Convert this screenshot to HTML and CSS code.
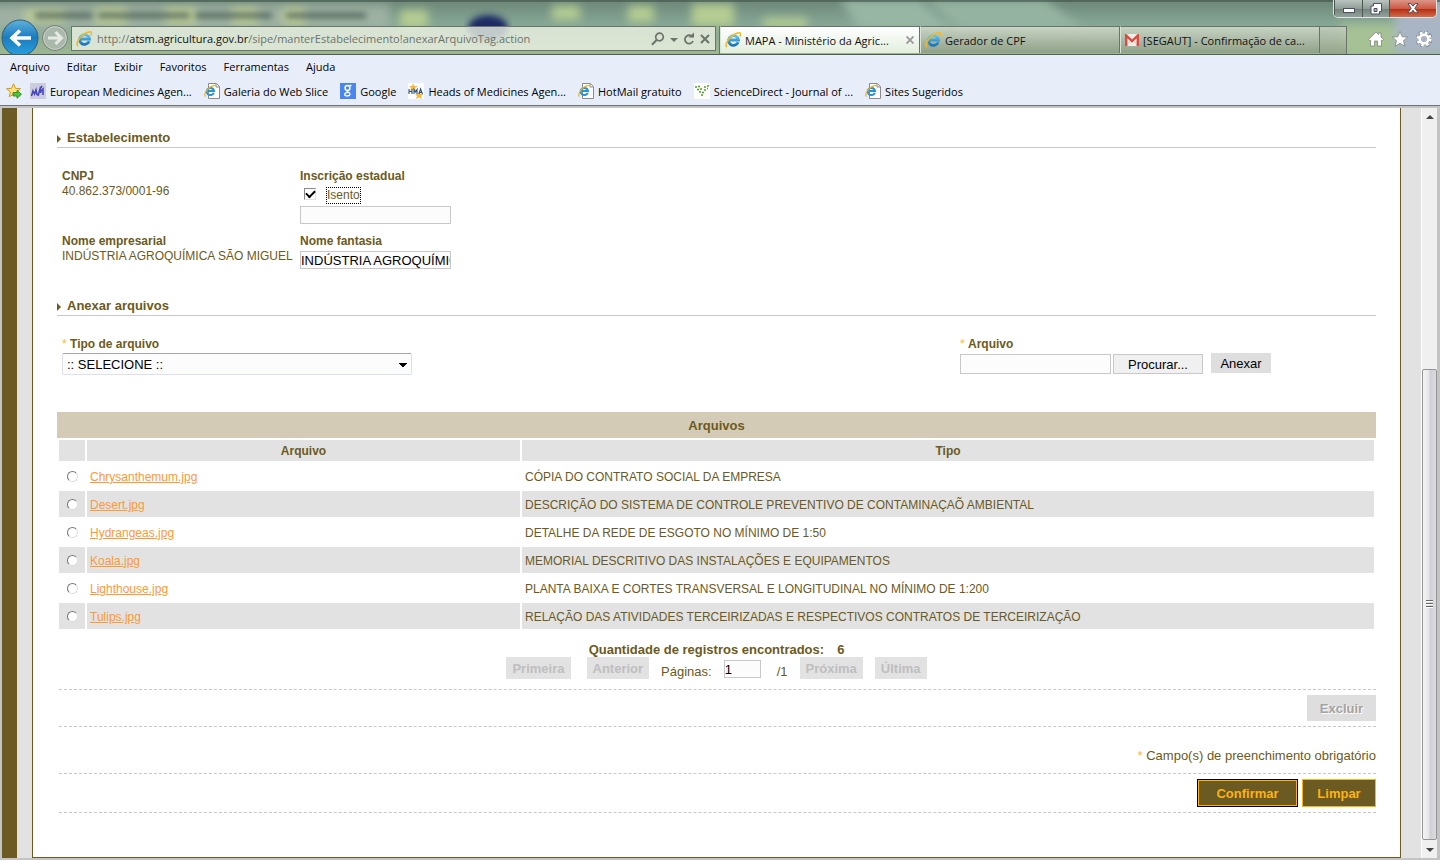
FILE: index.html
```html
<!DOCTYPE html>
<html lang="pt-BR">
<head>
<meta charset="utf-8">
<title>MAPA - Ministério da Agricultura</title>
<link rel="stylesheet" href="styles.css">
</head>
<body>
<svg class="defs" width="0" height="0" aria-hidden="true">
  <defs>
    <linearGradient id="blue" x1="0" y1="0" x2="0" y2="1"><stop offset="0" stop-color="#5fc3f0"/><stop offset="1" stop-color="#1b76bd"/></linearGradient>
    <symbol id="ie" viewBox="0 0 16 16">
      <path d="M13.2 10.2a5 4.8 0 1 1 .3-2.2H5" fill="none" stroke="url(#blue)" stroke-width="2.8"/>
      <path d="M2.2 15C-.4 14 1.800 8.200 6.200 4.600 10 1.400 14.600 0 15.400 1.500c.4.800 0 2-.6 3" fill="none" stroke="#f4b81c" stroke-width="1.500"/>
    </symbol>
    <symbol id="iepage" viewBox="0 0 16 16">
      <path d="M4.500.500h8l3 3v12h-11z" fill="#fff" stroke="#8b8b8b"/>
      <path d="M12 .500V4h3.500" fill="#eee" stroke="#8b8b8b"/>
      <path d="M9.800 9.800a3.700 3.600 0 1 1 .2-1.900H4" fill="none" stroke="#2b91d2" stroke-width="2"/>
      <path d="M1.500 13.500C-.2 12.600 1.200 8.200 4.400 5.400 7.300 2.900 10.600 1.800 11.400 3" fill="none" stroke="#f2b51d" stroke-width="1.200"/>
    </symbol>
  </defs>
</svg>

<header class="glass">
  <svg class="glass-art" viewBox="0 0 1440 54" preserveAspectRatio="none" aria-hidden="true">
    <defs>
      <filter id="soft" x="-50%" y="-50%" width="200%" height="200%"><feGaussianBlur stdDeviation="5"/></filter>
      <filter id="smear" x="-10%" y="-200%" width="120%" height="500%"><feGaussianBlur stdDeviation="3"/></filter>
    </defs>
    <g filter="url(#soft)">
      <path d="M-10 4h400v24H-10z" fill="#a9b8ab" opacity=".7"/>
      <path d="M25 10h40v12H25zM95 8h32v16H95zM165 8h32v16h-32zM232 8h26v16h-26zM283 8h22v16h-22z" fill="#c2d197"/>
      <path d="M400 10h28v18h-28zM552 6h28v14h-28zM628 6h26v16h-26zM692 4h42v22h-42zM763 18h44v10h-44z" fill="#b6cd92"/>
      <path d="M840 0h80l30 30h-90z" fill="#98b6a4"/>
      <path d="M925 0h120l40 30H960z" fill="#95b3a1"/>
      <path d="M1340 24h100v30h-100z" fill="#a6c294"/>
      <path d="M1395 0h60v54h-60z" fill="#a9b5c4"/>
    </g>
    <g filter="url(#smear)">
      <path d="M35 13h58v5H35zM98 13h92v5H98zM195 13h77v5h-77zM286 13h80v5h-80z" fill="#4d6258"/>
    </g>
    <ellipse cx="488" cy="28" rx="20" ry="13" fill="#1d2c64" filter="url(#smear)"/>
    <path d="M0 0h1440v2H0z" fill="#3f5449" opacity=".6"/>
  </svg>

  <div class="win-buttons">
    <button class="win min" aria-label="Minimizar"><svg width="12" height="6"><rect x=".5" y=".5" width="11" height="4" fill="#fff" stroke="#4b5068"/></svg></button>
    <button class="win max" aria-label="Restaurar"><svg width="13" height="12"><path d="M3.500.500h8v8h-2v2.500h-8.500v-8h2.500z" fill="#fff" stroke="#4b5068"/><path d="M4 5.500h3v3H4z" fill="#aab" stroke="#4b5068"/></svg></button>
    <button class="win close" aria-label="Fechar"><svg width="12" height="11"><path d="M1 .700h3l2 2.500 2-2.500h3L7.800 5.300l3.400 4.500H8L6 7.300 4 9.800H.8l3.400-4.500z" fill="#fff" stroke="#5a4a55"/></svg></button>
  </div>

  <nav class="toolbar">
    <button class="back" aria-label="Voltar"><svg width="38" height="35" viewBox="0 0 38 35"><defs><linearGradient id="bk" x1="0" y1="0" x2="0" y2="1"><stop offset="0" stop-color="#5fb2dc"/><stop offset=".48" stop-color="#1a7cc0"/><stop offset="1" stop-color="#2aa0dc"/></linearGradient></defs><circle cx="19" cy="19" r="18" fill="url(#bk)" stroke="#3c5a6c"/><path d="M30 19H12M19 11.500L11 19l8 7.500" fill="none" stroke="#fff" stroke-width="3.500"/></svg></button>
    <button class="forward" aria-label="Avançar"><svg width="28" height="28" viewBox="0 0 28 28"><circle cx="14" cy="14" r="12.500" fill="#a9b8ab" stroke="#758078"/><circle cx="14" cy="14" r="11.300" fill="none" stroke="#c8d1c8"/><path d="M7 14h13M14.500 8l6 6-6 6" fill="none" stroke="#e4e9e3" stroke-width="3"/></svg></button>
    <div class="address">
      <svg width="16" height="16"><use href="#ie"/></svg>
      <div class="url">http://<b>atsm.agricultura.gov.br</b>/sipe/manterEstabelecimento!anexarArquivoTag.action</div>
      <button class="ico" aria-label="Pesquisar"><svg width="14" height="14" viewBox="0 0 14 14"><circle cx="8.500" cy="5" r="3.800" fill="none" stroke="#6c736b" stroke-width="1.700"/><path d="M5.800 7.800L1 12.800" stroke="#6c736b" stroke-width="2"/></svg></button>
      <button class="ico" aria-label="Mais opções"><svg width="8" height="14"><path d="M0 6h8L4 10z" fill="#6c736b"/></svg></button>
      <button class="ico reload" aria-label="Atualizar"><svg width="12" height="14" viewBox="0 0 12 14"><path d="M9.500 5A4.200 4.200 0 1 0 10 9" fill="none" stroke="#6c736b" stroke-width="1.800"/><path d="M5.500 5.500h5.500V.500z" fill="#6c736b"/></svg></button>
      <button class="ico" aria-label="Parar"><svg width="10" height="14" viewBox="0 0 10 14"><path d="M1 3l8 8M9 3l-8 8" stroke="#6c736b" stroke-width="2"/></svg></button>
    </div>
    <div class="tabs">
      <div class="tab active"><svg width="16" height="16"><use href="#ie"/></svg><span>MAPA - Ministério da Agric...</span><button class="ico" aria-label="Fechar guia"><svg width="8" height="8"><path d="M.5.500l7 7M7.500.500l-7 7" stroke="#999" stroke-width="1.800"/></svg></button></div>
      <div class="tab"><svg width="16" height="16"><use href="#ie"/></svg><span>Gerador de CPF</span></div>
      <div class="tab"><svg width="14" height="12" viewBox="0 0 14 12"><path d="M0 0h14v12H0z" fill="#f1eee8"/><path d="M1 12l5-6M13 12L8 6" stroke="#ccc"/><path d="M1.200 12V1.500L7 7l5.800-5.500V12" fill="none" stroke="#dc4a3d" stroke-width="2.400"/></svg><span>[SEGAUT] - Confirmação de ca...</span></div>
      <button class="new-tab" aria-label="Nova guia"></button>
    </div>
    <div class="tools">
      <button class="ico" aria-label="Início"><svg width="16" height="16" viewBox="0 0 16 16"><path d="M8 1l2.500 2.500V2H13v4l2.500 2.500-1 1L13.500 9v6H9.500v-5h-3v5h-4V9l-1 .500-1-1z" fill="#fff" stroke="#7d877c" stroke-width=".8"/></svg></button>
      <button class="ico" aria-label="Favoritos"><svg width="16" height="16" viewBox="0 0 16 16"><path d="M8 .500l2.200 5.200 5.500.400-4.200 3.600 1.400 5.500L8 12.300l-4.900 2.900 1.400-5.500L.3 6.100l5.500-.4z" fill="#fff" stroke="#7d877c" stroke-width=".8"/></svg></button>
      <button class="ico" aria-label="Ferramentas"><svg width="16" height="16" viewBox="0 0 16 16"><circle cx="8" cy="8" r="6.700" fill="none" stroke="#6f7786" stroke-width="3.400" stroke-dasharray="3.300 1.960"/><circle cx="8" cy="8" r="6.300" fill="none" stroke="#fff" stroke-width="2.800" stroke-dasharray="2.500 2.450"/><circle cx="8" cy="8" r="4.300" fill="none" stroke="#fff" stroke-width="2.400"/></svg></button>
    </div>
  </nav>
</header>

<div class="bars">
  <nav class="menu">
    <button>Arquivo</button><button>Editar</button><button>Exibir</button><button>Favoritos</button><button>Ferramentas</button><button>Ajuda</button>
  </nav>
  <nav class="favorites">
    <button aria-label="Adicionar a favoritos"><svg width="16" height="16" viewBox="0 0 16 16"><path d="M7.500.800l2 4.500 5 .400-3.800 3.300 1.200 4.800-4.400-2.600-4.300 2.600 1.200-4.800L.6 5.700l5-.4z" fill="#ffe27a" stroke="#d39a1c"/><path d="M7 9.500h4V7.300l4.500 4-4.500 4V13H7z" fill="#4fc33b" stroke="#20841c" stroke-width=".8"/></svg></button>
    <a href="#"><svg width="16" height="16" viewBox="0 0 16 16"><path d="M0 0h16v16H0z" fill="#ccd"/><path d="M1.500 13L3 8l1.500 3L6 7l1 5M8 13l2-7 1 4M12 3l-2 3M11 8l2-2v6" fill="none" stroke="#4745bb" stroke-width="1.600"/></svg><span>European Medicines Agen...</span></a>
    <a href="#"><svg width="16" height="16"><use href="#iepage"/></svg><span>Galeria do Web Slice</span></a>
    <a href="#"><svg width="16" height="16" viewBox="0 0 16 16"><path d="M0 0h16v16H0z" fill="#4a86ee"/><circle cx="7.500" cy="5" r="2.400" fill="none" stroke="#fff" stroke-width="1.500"/><path d="M9.500 2.500h2M7 7.500c-1.500 1 3.500 1.500 3 3.800-.4 2.200-5.200 2.200-5.300.2 0-1.500 2-2 3.500-1.800" fill="none" stroke="#fff" stroke-width="1.300"/></svg><span>Google</span></a>
    <a href="#"><svg width="16" height="16" viewBox="0 0 16 16"><path d="M0 0h16v16H0z" fill="#fff"/><path d="M5 0l1.300 3H10L7 5l1 3-3-1.800L2 8l1-3L1 3h3zM11 8l1 3h3.500L13 13l1 3-3-1.600L8 16l1-3-2-2h3z" fill="#f8b93c"/><path d="M1 6v5M4 6v5M1 8.500h3M6 11V6.500l1.500 2.500L9 6.500V11M11 11l1.500-5 2 5M12 9.500h2" fill="none" stroke="#25507f" stroke-width="1.100"/></svg><span>Heads of Medicines Agen...</span></a>
    <a href="#"><svg width="16" height="16"><use href="#iepage"/></svg><span>HotMail gratuito</span></a>
    <a href="#"><svg width="16" height="16" viewBox="0 0 16 16"><path d="M0 0h16v16H0z" fill="#fff"/><path d="M1 4h2M4 3.500h2M3 6.500h2M6 6h2M5 9h2M7 12h2M10 4h2M13 3h2M10 7h2M8 9.500h2M13 5.500h1" stroke="#559b2b" stroke-width="1.600"/></svg><span>ScienceDirect - Journal of ...</span></a>
    <a href="#"><svg width="16" height="16"><use href="#iepage"/></svg><span>Sites Sugeridos</span></a>
  </nav>
</div>

<div class="viewport">
  <div class="edge"></div>
  <main class="page">
    <h2><i class="mark"></i>Estabelecimento</h2>
    <div class="fields">
      <div class="field"><strong>CNPJ</strong><span>40.862.373/0001-96</span></div>
      <div class="field">
        <label for="ie-num"><strong>Inscrição estadual</strong></label>
        <div class="check"><input type="checkbox" id="isento" checked><label for="isento">Isento</label></div>
        <input class="text" type="text" id="ie-num">
      </div>
      <div class="field"><strong>Nome empresarial</strong><span>INDÚSTRIA AGROQUÍMICA SÃO MIGUEL</span></div>
      <div class="field">
        <label for="fantasia"><strong>Nome fantasia</strong></label>
        <input class="text gap" type="text" id="fantasia" value="INDÚSTRIA AGROQUÍMICA SÃO MIGUEL">
      </div>
    </div>

    <h2 class="second"><i class="mark"></i>Anexar arquivos</h2>
    <div class="attach">
      <div class="field type">
        <label for="tipo"><em>*</em> <strong>Tipo de arquivo</strong></label>
        <select id="tipo"><option>:: SELECIONE ::</option></select>
      </div>
      <div class="field file">
        <label for="arquivo"><em>*</em> <strong>Arquivo</strong></label>
        <div class="file-row"><input class="text tall" type="text" id="arquivo"><button class="browse">Procurar...</button><button class="add">Anexar</button></div>
      </div>
    </div>

    <table>
      <caption>Arquivos</caption>
      <colgroup><col class="c-radio"><col class="c-file"><col></colgroup>
      <thead><tr><th></th><th>Arquivo</th><th>Tipo</th></tr></thead>
      <tbody>
        <tr><td><input type="radio" name="f" aria-label="Chrysanthemum.jpg"></td><td><a href="#">Chrysanthemum.jpg</a></td><td>CÓPIA DO CONTRATO SOCIAL DA EMPRESA</td></tr>
        <tr><td><input type="radio" name="f" aria-label="Desert.jpg"></td><td><a href="#">Desert.jpg</a></td><td>DESCRIÇÃO DO SISTEMA DE CONTROLE PREVENTIVO DE CONTAMINAÇAÕ AMBIENTAL</td></tr>
        <tr><td><input type="radio" name="f" aria-label="Hydrangeas.jpg"></td><td><a href="#">Hydrangeas.jpg</a></td><td>DETALHE DA REDE DE ESGOTO NO MÍNIMO DE 1:50</td></tr>
        <tr><td><input type="radio" name="f" aria-label="Koala.jpg"></td><td><a href="#">Koala.jpg</a></td><td>MEMORIAL DESCRITIVO DAS INSTALAÇÕES E EQUIPAMENTOS</td></tr>
        <tr><td><input type="radio" name="f" aria-label="Lighthouse.jpg"></td><td><a href="#">Lighthouse.jpg</a></td><td>PLANTA BAIXA E CORTES TRANSVERSAL E LONGITUDINAL NO MÍNIMO DE 1:200</td></tr>
        <tr><td><input type="radio" name="f" aria-label="Tulips.jpg"></td><td><a href="#">Tulips.jpg</a></td><td>RELAÇÃO DAS ATIVIDADES TERCEIRIZADAS E RESPECTIVOS CONTRATOS DE TERCEIRIZAÇÃO</td></tr>
      </tbody>
    </table>

    <p class="count"><span>Quantidade de registros encontrados:</span><span>6</span></p>
    <div class="pager">
      <button disabled class="first">Primeira</button>
      <button disabled>Anterior</button>
      <label for="pg">Páginas:</label>
      <input class="text" type="text" id="pg" value="1">
      <span class="total">/1</span>
      <button disabled>Próxima</button>
      <button disabled>Última</button>
    </div>
    <div class="rule actions"><button class="delete" disabled>Excluir</button></div>
    <p class="rule required"><em>*</em> Campo(s) de preenchimento obrigatório</p>
    <div class="rule actions submit"><button class="main default">Confirmar</button><button class="main">Limpar</button></div>
    <div class="rule"></div>
  </main>
  <div class="scrollbar" aria-hidden="true">
    <svg width="8" height="4"><path d="M0 4h8L4 0z" fill="#444"/></svg>
    <div class="track"><div class="thumb"><i></i><i></i><i></i></div></div>
    <svg width="8" height="4"><path d="M0 0h8L4 4z" fill="#444"/></svg>
  </div>
</div>
</body>
</html>
```
FILE: styles.css
```css
* { box-sizing: border-box; }
body {
  margin: 0;
  min-height: 100vh;
  display: flex;
  flex-direction: column;
  background: #c4c4c4;
  font: 12px/15px "Liberation Sans", Arial, sans-serif;
  color: #6b5a22;
}
button, input, select { font: inherit; margin: 0; border-radius: 0; }
button { padding: 0; border: 0; background: none; color: inherit; }
svg { display: block; flex: none; }
em { font-style: normal; color: #fbb829; }
.defs { position: absolute; }

/* Browser window */
.glass {
  position: relative;
  height: 55px;
  padding-top: 19px;
  background: linear-gradient(#6c8577, #84a493 40%, #9cb792);
  border-bottom: 1px solid #4f5c52;
  overflow: hidden;
}
.glass-art { position: absolute; inset: 0; width: 100%; height: 100%; }
.win-buttons {
  position: absolute;
  top: 0;
  right: 3px;
  display: flex;
  height: 18px;
  border: 1px solid #dfe5e4;
  border-top: 0;
  border-radius: 0 0 5px 5px;
  overflow: hidden;
  z-index: 1;
}
.win { display: grid; place-items: center; background: linear-gradient(#b9c3bf, #909e97 50%, #72827a 51%, #93a29b); border-left: 1px solid #4b5553; }
.min { width: 28px; padding-top: 4px; }
.max { width: 27px; }
.close { width: 47px; background: linear-gradient(#dc9587, #cc5b45 50%, #b02c12 51%, #d46a4a); }
.toolbar { position: relative; display: flex; height: 35px; font-family: "Open Sans", sans-serif; font-size: 11px; color: #111; }
.back { width: 38px; height: 35px; margin-left: 1px; }
.forward { width: 28px; height: 28px; margin: 5px 2px 0 2px; }
.address {
  flex: 1;
  min-width: 0;
  height: 25px;
  margin: 7px 3px 0 0;
  padding: 0 5px 0 4px;
  display: flex;
  align-items: center;
  gap: 5px;
  background: rgba(235, 241, 228, .8);
  border: 1px solid #6b746c;
}
.url { flex: 1; min-width: 0; overflow: hidden; white-space: nowrap; color: #6c736b; }
.url b { font-weight: 400; color: #111; }
.tabs { display: flex; margin-top: 7px; border-left: 1px solid #6b746c; }
.tab {
  width: 200px;
  height: 27px;
  padding: 0 5px 0 4px;
  display: flex;
  align-items: center;
  gap: 4px;
  white-space: nowrap;
  background: linear-gradient(rgba(215, 222, 208, .8), rgba(140, 155, 133, .8));
  border: 1px solid #6b746c;
  border-left-color: #dbe2d6;
  border-bottom: 0;
}
.tab span { flex: 1; overflow: hidden; }
.tab.active { background: linear-gradient(#fff, #e2eede); }
.new-tab { width: 27px; background: linear-gradient(rgba(200, 210, 195, .8), rgba(145, 160, 135, .8)); border: 1px solid #6b746c; border-left: 0; border-bottom: 0; }
.tools { display: flex; align-items: center; gap: 8px; margin: 4px 8px 0 21px; }

.bars { background: #e7eefa; border-bottom: 1px solid #707274; font-family: "Open Sans", sans-serif; font-size: 11px; color: #000; }
.menu { display: flex; gap: 17px; height: 22px; align-items: center; padding-left: 10px; }
.favorites { display: flex; gap: 8px; height: 28px; align-items: center; padding-left: 6px; white-space: nowrap; }
.favorites a { display: flex; gap: 4px; margin-right: 4px; align-items: center; color: inherit; text-decoration: none; }

/* Page viewport */
.viewport { flex: 1; display: flex; margin: 2px 3px 2px 2px; background: #e2e2e2; }
.edge { width: 15px; background: #6b5a22; }
.page {
  flex: 1;
  min-width: 0;
  margin: 0 20px 0 15px;
  padding: 22px 24px 44px;
  background: #fff;
  border: 1px solid #6b5a22;
  border-top: 0;
}
h2 {
  display: flex;
  align-items: center;
  gap: 5px;
  margin: 0 0 21px;
  padding-bottom: 2px;
  border-bottom: 1px solid #c8c8c8;
  font-size: 13px;
  line-height: 15px;
}
.mark { border: 4px solid transparent; border-left: 4px solid #6b5a22; border-right: 0; margin: 3px 1px 0 0; }
.second { margin-top: 29px; }
.fields { display: grid; grid-template-columns: 238px auto; row-gap: 10px; justify-content: start; padding-left: 5px; }
.field { display: flex; flex-direction: column; align-items: flex-start; white-space: nowrap; }
.text { width: 151px; height: 18px; padding: 0; border: 1px solid #c8c8c8; background: #fcfcfc; color: #000; font-size: 13px; }
.gap { margin-top: 2px; }
.tall { height: 20px; }
.check { display: flex; align-items: center; gap: 11px; height: 22px; padding-left: 4px; }
.check label { outline: 1px dotted #000; }
.check input {
  appearance: none;
  width: 12px;
  height: 12px;
  margin-bottom: 2px;
  border: 1px solid #e2e2e2;
  border-top-color: #888;
  border-left-color: #888;
  background: #fff;
  display: grid;
  place-items: center;
}
.check input::after { content: ""; width: 7px; height: 4px; border-left: 2px solid #000; border-bottom: 2px solid #000; transform: rotate(-45deg); margin-bottom: 2px; }
.attach { display: flex; padding-left: 5px; }
.type { flex: 1; }
.file { width: 416px; }
select {
  appearance: none;
  width: 350px;
  height: 22px;
  margin-top: 1px;
  padding: 0 4px;
  border: 1px solid #dde0ea;
  border-top-color: #a5a5a5;
  border-radius: 2px;
  color: #000;
  font-size: 13px;
  background: linear-gradient(to bottom right, #000 50%, transparent 51%) no-repeat right 4px top 9px / 4px 4px,
    linear-gradient(to bottom left, #000 50%, transparent 51%) no-repeat right 8px top 9px / 4px 4px, #fcfcfc;
}
.file-row { display: flex; margin-top: 2px; }
.browse { width: 90px; height: 20px; margin-left: 2px; border: 1px solid #c8c8c8; background: #f0f0f0; color: #000; font-size: 13px; }
.add { width: 60px; height: 20px; margin: -1px 0 0 8px; background: #dedede; color: #000; font-size: 13px; }

table { width: 100%; margin-top: 37px; border-spacing: 2px; table-layout: fixed; }
caption { height: 26px; padding-top: 1px; background: #d3cbb5; font-size: 13px; font-weight: 700; line-height: 25px; }
.c-radio { width: 26px; }
.c-file { width: 433px; }
th { height: 21px; padding: 2px 0 0; background: #e2e2e2; }
td { height: 26px; padding: 3px 3px 0; white-space: nowrap; }
tr:nth-child(even) td { background: #e2e2e2; }
td a { color: #f93; }
td input {
  appearance: none;
  display: block;
  width: 11px;
  height: 11px;
  margin: 0 0 3px 5px;
  border: 1px solid #ddd;
  border-top-color: #777;
  border-left-color: #777;
  border-radius: 50%;
  background: #fff;
}
.count { display: flex; justify-content: center; gap: 13px; margin: 11px 0 0; font-size: 13px; font-weight: 700; }
.pager { display: flex; justify-content: center; gap: 12px; height: 32px; font-size: 13px; }
.pager button { height: 22px; padding: 0 6px; background: #e2e2e2; color: #bebebe; font-weight: 700; }
.pager .first, .pager .text { margin-right: 4px; }
.pager .text { width: 37px; margin-top: 3px; }
.pager label, .total { padding-top: 7px; }
.rule { margin: 0 0 0 2px; border-top: 1px dashed #c8c8c8; }
.actions { display: flex; justify-content: flex-end; gap: 4px; padding: 5px 0; font-size: 13px; font-weight: 700; }
.delete { width: 69px; height: 26px; background: #dedede; color: #a3a3a3; text-shadow: 1px 1px #fff; }
.required { padding: 21px 0 10px; text-align: right; font-size: 13px; }
.main { width: 74px; height: 28px; border: 1px solid #fbb315; background: #6b5a22; color: #fbb315; }
.default { width: 101px; border: 1px solid #000; box-shadow: inset 0 0 0 1px #fbb315; }

.scrollbar { width: 16px; display: flex; flex-direction: column; align-items: center; padding: 7px 0 6px; background: #f0f0f0; border-left: 1px solid #fff; }
.track { flex: 1; width: 100%; display: flex; flex-direction: column; justify-content: flex-end; padding: 7px 0 8px; }
.thumb {
  height: 66%;
  display: flex;
  flex-direction: column;
  align-items: center;
  justify-content: center;
  gap: 1px;
  border: 1px solid #949494;
  border-radius: 2px;
  background: linear-gradient(90deg, #f5f5f5, #e6e6e9 45%, #cfcfd6 55%, #dcdcdf);
}
.thumb i { width: 7px; height: 2px; background: #666; border-bottom: 1px solid #fff; }
```
